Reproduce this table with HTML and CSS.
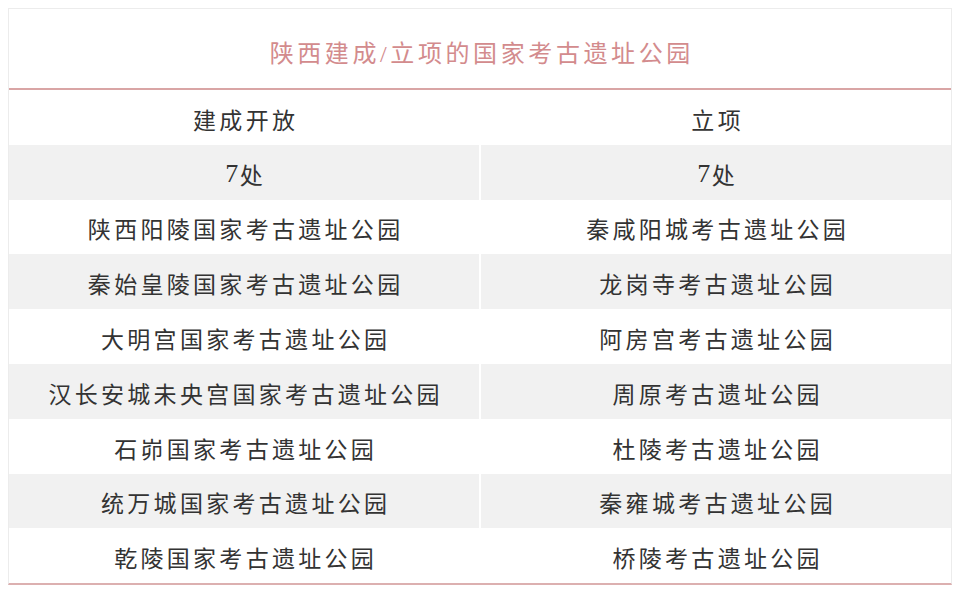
FILE: index.html
```html
<!DOCTYPE html>
<html lang="zh-CN">
<head>
<meta charset="utf-8">
<title>陕西建成/立项的国家考古遗址公园</title>
<link rel="stylesheet" href="styles.css">
</head>
<body>
<div class="table">
  <div class="title">陕西建成/立项的国家考古遗址公园</div>
  <div class="grid">
    <div class="cell">建成开放</div><div class="cell">立项</div>
    <div class="cell alt"><span class="num">7</span>处</div><div class="cell alt"><span class="num">7</span>处</div>
    <div class="cell">陕西阳陵国家考古遗址公园</div><div class="cell">秦咸阳城考古遗址公园</div>
    <div class="cell alt">秦始皇陵国家考古遗址公园</div><div class="cell alt">龙岗寺考古遗址公园</div>
    <div class="cell">大明宫国家考古遗址公园</div><div class="cell">阿房宫考古遗址公园</div>
    <div class="cell alt">汉长安城未央宫国家考古遗址公园</div><div class="cell alt">周原考古遗址公园</div>
    <div class="cell">石峁国家考古遗址公园</div><div class="cell">杜陵考古遗址公园</div>
    <div class="cell alt">统万城国家考古遗址公园</div><div class="cell alt">秦雍城考古遗址公园</div>
    <div class="cell">乾陵国家考古遗址公园</div><div class="cell">桥陵考古遗址公园</div>
  </div>
</div>
</body>
</html>
```
FILE: styles.css
```css
html, body {
  margin: 0;
  padding: 0;
  background: #ffffff;
}
body {
  padding: 8px 8px 0 8px;
  font-family: "Liberation Serif", "Noto Sans CJK SC", serif;
}
.table {
  width: 944px;
  box-sizing: border-box;
  border: 1px solid #ececec;
  border-bottom: 2px solid #dcb0b0;
  background: #ffffff;
}
.title {
  height: 81px;
  box-sizing: border-box;
  padding-top: 6px;
  border-bottom: 2px solid #d9a5a5;
  display: flex;
  align-items: center;
  justify-content: center;
  color: #d38b8d;
  font-size: 24px;
  letter-spacing: 3.6px;
  text-indent: 3.6px;
}
.grid {
  display: grid;
  grid-template-columns: 470px 1fr;
  grid-auto-rows: 54.8px;
  column-gap: 2px;
  background: #ffffff;
}
.cell {
  display: flex;
  align-items: center;
  justify-content: center;
  box-sizing: border-box;
  padding-top: 3px;
  color: #333333;
  font-size: 23px;
  letter-spacing: 3.3px;
  text-indent: 3.3px;
  background: #ffffff;
}
.cell.alt {
  background: #f1f1f1;
}
.num {
  font-size: 26px;
  letter-spacing: -2px;
}
```
